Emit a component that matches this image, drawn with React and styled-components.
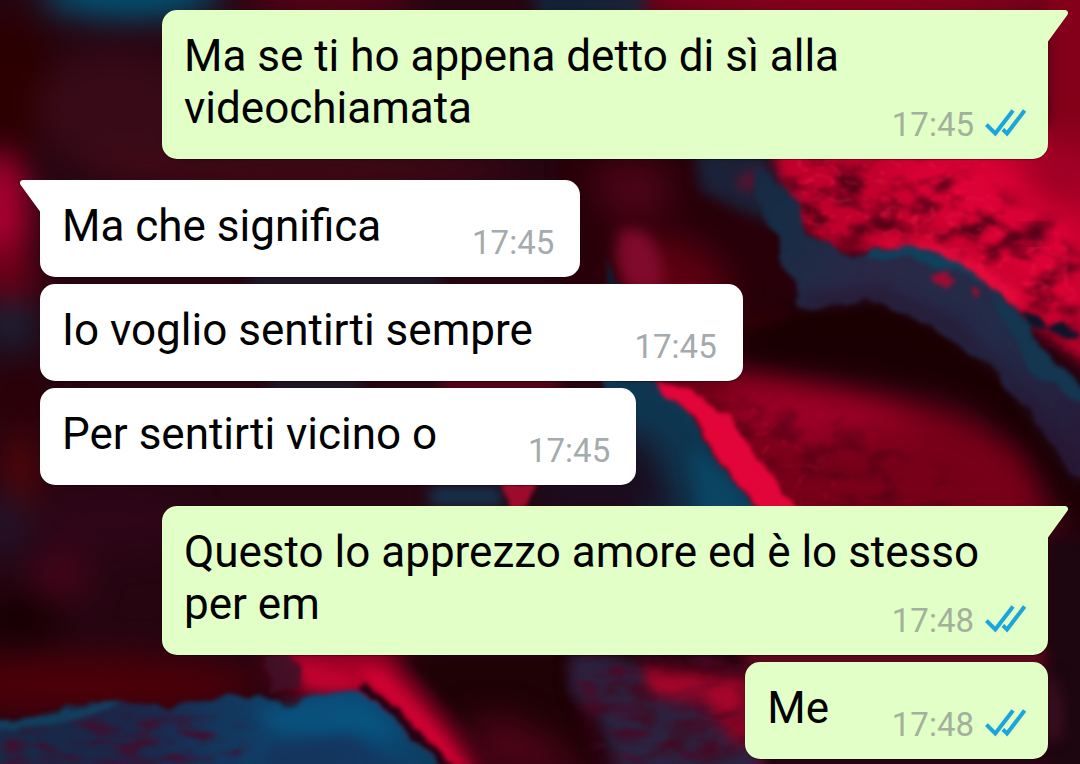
import styled, { createGlobalStyle } from "styled-components"

let GlobalStyle = createGlobalStyle`
  body {
    margin: 0;
    background: #24040c;
    font-family: Roboto, "Noto Sans", sans-serif;
  }
`
let Page = styled.main`
  position: relative;
  min-height: 100vh;
  box-sizing: border-box;
  overflow: hidden;
  padding: 10px 32px 5px 40px;
`
let WallpaperSvg = styled.svg`
  position: absolute;
  inset: 0;
  width: 100%;
  height: 100%;

  filter {
    color-interpolation-filters: sRGB;
  }
`
let Conversation = styled.div`
  position: relative;
  display: flex;
  flex-direction: column;
  gap: 21px;
`
let Group = styled.ul`
  display: flex;
  flex-direction: column;
  align-items: ${ props => props.$own ? 'flex-end' : 'flex-start' };
  gap: 7px;
  margin: 0;
  padding: ${ props => props.$own ? '0 0 0 122px' : '0 122px 0 0' };
  list-style: none;
`
let Bubble = styled.li`
  position: relative;
  padding: 20px 22px 25px 22px;
  border-radius: 15px;
  background: ${ props => props.$own ? '#e1ffc7' : '#ffffff' };
  box-shadow: 0 1px 1px rgba(0, 0, 0, 0.35);

  &:first-child {
    ${ props => props.$own ? 'border-top-right-radius' : 'border-top-left-radius' }: ${ props => props.$tail ? '0' : '15px' };
  }
`
let Text = styled.p`
  margin: 0;
  color: #000000;
  font-size: 44px;
  line-height: 52px;
  white-space: pre-wrap;
`
let MetaSpace = styled.span`
  display: inline-block;
  width: ${ props => props.$own ? '197px' : '177px' };
`
let Meta = styled.div`
  position: absolute;
  right: ${ props => props.$own ? '22px' : '26px' };
  bottom: 14px;
  display: flex;
  align-items: center;
  gap: 11px;
  font-size: 33px;
  line-height: 40px;
`
let Time = styled.time`
  color: ${ props => props.$own ? '#a3b09b' : '#a5aaac' };
`
let TailSvg = styled.svg`
  position: absolute;
  top: 0;
  ${ props => props.$own ? 'left: 100%' : 'right: 100%' };
  width: 20px;
  height: 32px;
  transform: ${ props => props.$own ? 'none' : 'scaleX(-1)' };
  fill: ${ props => props.$own ? '#e1ffc7' : '#ffffff' };
`
let TicksSvg = styled.svg`
  width: 41px;
  height: 33px;
  fill: none;
  stroke: #1aa6dd;
  stroke-width: 4;
`

let groups = [
  {
    id: 1,
    own: true,
    messages: [
      { id: 11, text: 'Ma se ti ho appena detto di sì alla videochiamata', time: '17:45' },
    ],
  },
  {
    id: 2,
    own: false,
    messages: [
      { id: 21, text: 'Ma che significa', time: '17:45' },
      { id: 22, text: 'Io voglio sentirti sempre ', time: '17:45' },
      { id: 23, text: 'Per sentirti vicino o', time: '17:45' },
    ],
  },
  {
    id: 3,
    own: true,
    messages: [
      { id: 31, text: 'Questo lo apprezzo amore ed è lo stesso per em', time: '17:48' },
      { id: 32, text: 'Me', time: '17:48' },
    ],
  },
]

function Tail ({ own }) {
  return (
    <TailSvg $own={own} viewBox="0 0 20 32" aria-hidden="true">
      <path d="M-1 0H17a3 3 0 0 1 2.3 5L0 31.5h-1z"/>
    </TailSvg>
  )
}

function Ticks () {
  return (
    <TicksSvg viewBox="0 0 41 33" role="img" aria-label="Letto">
      <path d="M1.4 15.6L10.3 24.5L28 1.5"/>
      <path d="M17.8 20.4L22 24.5L39.6 1.5"/>
    </TicksSvg>
  )
}

function Wallpaper () {
  return (
    <WallpaperSvg viewBox="0 0 1080 764" preserveAspectRatio="xMidYMid slice" aria-hidden="true">
      <defs>
        <filter id="haze" x="-60%" y="-60%" width="220%" height="220%">
          <feGaussianBlur stdDeviation="16"/>
        </filter>
        <filter id="soft" x="-30%" y="-30%" width="160%" height="160%">
          <feGaussianBlur stdDeviation="7"/>
        </filter>
        <filter id="rough" x="-20%" y="-20%" width="140%" height="140%">
          <feTurbulence type="fractalNoise" baseFrequency="0.04" numOctaves="3" seed="4" result="n"/>
          <feDisplacementMap in="SourceGraphic" in2="n" scale="14" xChannelSelector="R" yChannelSelector="G"/>
          <feGaussianBlur stdDeviation="2"/>
        </filter>
        <filter id="rock" x="-10%" y="-10%" width="120%" height="120%">
          <feGaussianBlur in="SourceGraphic" stdDeviation="12" result="shape"/>
          <feTurbulence type="fractalNoise" baseFrequency="0.03 0.05" numOctaves="5" seed="9"/>
          <feColorMatrix values="0 0 0 0 0.28  0 0 0 0 0  0 0 0 0 0.08  3.4 0 0 0 -1.5" result="spots"/>
          <feComposite in="spots" in2="shape" operator="in"/>
          <feGaussianBlur stdDeviation="1.4"/>
        </filter>
        <filter id="glints" x="-10%" y="-10%" width="120%" height="120%">
          <feGaussianBlur in="SourceGraphic" stdDeviation="12" result="shape"/>
          <feTurbulence type="turbulence" baseFrequency="0.03 0.06" numOctaves="3" seed="21"/>
          <feColorMatrix values="0 0 0 0 1  0 0 0 0 0.12  0 0 0 0 0.3  -6 0 0 0 0.85" result="spots"/>
          <feComposite in="spots" in2="shape" operator="in"/>
          <feGaussianBlur stdDeviation="1.4"/>
        </filter>
        <filter id="veins" x="-10%" y="-10%" width="120%" height="120%">
          <feGaussianBlur in="SourceGraphic" stdDeviation="8" result="shape"/>
          <feTurbulence type="fractalNoise" baseFrequency="0.025 0.07" numOctaves="4" seed="33"/>
          <feColorMatrix values="0 0 0 0 0.28  0 0 0 0 0.04  0 0 0 0 0.16  3.4 0 0 0 -1.5" result="spots"/>
          <feComposite in="spots" in2="shape" operator="in"/>
          <feGaussianBlur stdDeviation="1.4"/>
        </filter>
        <linearGradient id="ridge" gradientUnits="userSpaceOnUse" x1="700" y1="160" x2="1080" y2="460">
          <stop offset="0" stopColor="#1c2440"/>
          <stop offset="0.2" stopColor="#172c45"/>
          <stop offset="0.42" stopColor="#2a2846"/>
          <stop offset="0.7" stopColor="#222b48"/>
          <stop offset="1" stopColor="#271a38"/>
        </linearGradient>
        <linearGradient id="wave" gradientUnits="userSpaceOnUse" x1="0" y1="0" x2="440" y2="0">
          <stop offset="0" stopColor="#172a48"/>
          <stop offset="0.3" stopColor="#1d2548"/>
          <stop offset="0.62" stopColor="#0f4069"/>
          <stop offset="0.85" stopColor="#0a4a76"/>
          <stop offset="1" stopColor="#0f3a5c"/>
        </linearGradient>
      </defs>

      <rect width="1080" height="764" fill="#260511"/>

      {/* top strip and left side */}
      <g filter="url(#haze)">
        <ellipse cx="130" cy="-6" rx="90" ry="24" fill="#005578"/>
        <ellipse cx="15" cy="85" rx="36" ry="70" fill="#2c0000"/>
        <ellipse cx="115" cy="110" rx="80" ry="60" fill="#380a18"/>
        <ellipse cx="0" cy="212" rx="30" ry="62" fill="#a8002e"/>
        <ellipse cx="8" cy="275" rx="30" ry="26" fill="#6c0018"/>
        <ellipse cx="10" cy="325" rx="28" ry="24" fill="#1a2237"/>
        <ellipse cx="20" cy="400" rx="30" ry="30" fill="#2c0008"/>
        <ellipse cx="20" cy="475" rx="14" ry="46" fill="#5c0505"/>
        <ellipse cx="5" cy="525" rx="24" ry="36" fill="#231228"/>
        <ellipse cx="60" cy="575" rx="30" ry="26" fill="#43051a"/>
        <ellipse cx="110" cy="520" rx="80" ry="30" fill="#2f0618"/>
        <ellipse cx="20" cy="620" rx="40" ry="26" fill="#170003"/>
        <ellipse cx="80" cy="685" rx="180" ry="30" fill="#4c0008"/>
        <ellipse cx="300" cy="168" rx="220" ry="14" fill="#4a0a18"/>
        <ellipse cx="330" cy="-2" rx="90" ry="14" fill="#6a001a"/>
        <ellipse cx="860" cy="-2" rx="260" ry="22" fill="#98001f"/>
      </g>
      <path d="M530 -5H650L640 14H540z" fill="#10283d" filter="url(#soft)"/>

      {/* lit rock in the upper right */}
      <path d="M765 130H1120V390L1040 330L960 280L880 252L830 250L785 215z" fill="#c0002c" filter="url(#soft)"/>
      <path d="M1046 -20H1100V170H1046z" fill="#84001a" filter="url(#soft)"/>
      <path d="M880 158L1000 152L1080 185V330L1000 262L930 215z" fill="#dc0236" filter="url(#haze)"/>
      <path d="M1010 140H1100V215L1040 205z" fill="#a00026" filter="url(#haze)"/>
      <path d="M770 150L930 165L1080 240V370L1040 330L960 280L880 252L830 248L790 215z" fill="#fff" filter="url(#rock)" opacity="0.85"/>
      <path d="M765 150L960 150L1080 250V370L1040 330L960 280L880 252L830 248L785 215z" fill="#fff" filter="url(#glints)" opacity="0.8"/>
      <ellipse cx="1034" cy="234" rx="13" ry="8" fill="#2c0010" filter="url(#soft)"/>

      {/* dark hollow in the middle */}
      <path d="M560 150H760L790 260V340L700 350H560z" fill="#28000a" filter="url(#soft)"/>
      <path d="M590 165L660 160L675 215L610 225z" fill="#4b0418" filter="url(#haze)"/>
      <path d="M622 236L690 240L725 270L730 330H650L618 290z" fill="#5c0010" filter="url(#haze)"/>
      <path d="M744 320L790 312L800 330L750 335z" fill="#4a000c" filter="url(#soft)"/>
      <path d="M622 228Q610 262 630 290H662Q666 252 644 232z" fill="#800a2c" filter="url(#soft)"/>
      <path d="M604 250Q610 275 626 288H608z" fill="#121a30" filter="url(#rough)"/>

      {/* lower red slope, fading into the shadow of the ridge */}
      <path d="M640 375L744 365L860 390L960 410L1030 450L1060 530H640z" fill="#780019" filter="url(#haze)"/>
      <path d="M730 380Q800 385 880 405L930 430L800 440L730 420z" fill="#a00028" filter="url(#haze)"/>
      <path d="M690 400L760 400L880 440L980 500V520H720z" fill="#fff" filter="url(#rock)" opacity="0.6"/>
      <path d="M690 395L744 395L800 430L860 510H770z" fill="#fff" filter="url(#glints)" opacity="0.4"/>
      <path d="M735 330L800 310L870 298L940 310L1010 350L1070 410L1120 540L1070 520Q1030 430 950 390Q850 370 735 362z" fill="#1b0002" filter="url(#haze)"/>
      <path d="M750 335L800 312L870 300L940 318L1010 365L1060 430L1080 500Q1020 400 940 370Q850 350 750 352z" fill="#1b0002" filter="url(#soft)"/>

      {/* blue ridge running down to the right */}
      <path d="M695 150L765 150L778 185L800 205L780 225L740 210L700 190z" fill="#1b2138" filter="url(#soft)"/>
      <path d="M736 180L768 168L748 192z" fill="#7c0a2a" filter="url(#soft)"/>
      <path d="M862 242Q910 238 950 248L1008 284L1030 312L1000 304L930 258z" fill="#f20c40" filter="url(#soft)"/>
      <g filter="url(#rough)">
        <path d="M755 160L778 182L800 205L806 232L852 258L876 247L938 250L985 280L1018 308L1040 345L1090 395V500L1050 440L1000 375L940 330L880 301L800 308L790 270L775 235L760 215z" fill="url(#ridge)"/>
        <path d="M868 249Q910 245 946 254L985 284L940 266Q905 256 866 260z" fill="#10405c"/>
        <path d="M990 290L1018 308L1040 345L1090 395V410L1030 372z" fill="#143650"/>
        <path d="M932 272l14 -3l8 14l-9 8zM968 286l9 2l3 10l-7 -3z" fill="#9c0c34"/>
        <path d="M1022 312l16 2l12 16l-20 -2zM1045 328l18 -6l14 14l-18 2z" fill="#0c1429"/>
      </g>
      <path d="M800 295L880 285L960 320L1040 405L1080 460V490L1000 375L940 330L880 302L800 310z" fill="#281430" opacity="0.6" filter="url(#soft)"/>

      {/* lower blue patch with a bright edge */}
      <path d="M430 487H500L505 506H430z" fill="#143550" filter="url(#soft)"/>
      <path d="M600 380H655L690 410L715 455L765 520H640z" fill="#0f3650" filter="url(#rough)"/>
      <path d="M540 420L650 440L680 520H540z" fill="#1a0c1e" filter="url(#haze)"/>
      <path d="M690 445L730 480L760 515H700z" fill="#0b4464" filter="url(#soft)"/>
      <path d="M655 378L690 390L730 420L765 465L800 515H764L735 478L712 448L695 415L660 393z" fill="#e20539" filter="url(#rough)"/>
      <path d="M499 480H535L528 510H508z" fill="#9c0b2c" filter="url(#rough)"/>
      <path d="M250 277H440V286H250zM270 381H360V389H270z" fill="#152a42" filter="url(#soft)"/>
      <path d="M440 378H560V391H440z" fill="#680619" filter="url(#soft)"/>

      {/* bottom wave */}
      <path d="M270 640H385L430 700L490 775H400L345 690L290 690z" fill="#a80028" filter="url(#haze)"/>
      <path d="M290 658L350 672L375 680L340 695L305 690z" fill="#c00230" filter="url(#soft)"/>
      <path d="M362 665L385 672L430 720L478 775H450L400 712L368 685z" fill="#d20234" filter="url(#soft)"/>
      <path d="M366 680L376 690L460 768H440L362 690z" fill="#2a0012" filter="url(#rough)"/>
      <g filter="url(#rough)">
        <path d="M-20 722L40 716L75 704L110 700L165 706L215 700L230 690L245 700L262 694L285 706L330 692L360 690L385 710L460 780H-20z" fill="url(#wave)"/>
        <path d="M-20 722L40 717L110 700L122 706L60 724L-20 732z" fill="#12405f"/>
      </g>
      <path d="M255 712L330 697L360 700L400 735L280 735z" fill="#075a86" opacity="0.6" filter="url(#soft)"/>
      <path d="M270 745L350 735L420 775H260z" fill="#192c54" opacity="0.6" filter="url(#soft)"/>
      <path d="M0 736L110 718L240 722V764H0z" fill="#fff" filter="url(#veins)"/>
      <path d="M268 650Q300 655 304 685L270 694z" fill="#401127" filter="url(#rough)" opacity="0.9"/>

      {/* lower middle rubble */}
      <path d="M400 655H570V700L600 764H500z" fill="#1e0206" filter="url(#soft)"/>
      <path d="M640 665L760 675V775H640z" fill="#850625" filter="url(#soft)"/>
      <path d="M465 720Q520 700 590 775H490z" fill="#4c0418" filter="url(#haze)"/>
      <path d="M570 655H600L640 665L650 695L700 705L735 745H760V780H620L600 720L570 690z" fill="#2b2340" filter="url(#soft)"/>
      <path d="M570 655H740V764H600z" fill="#fff" filter="url(#veins)"/>
      <path d="M570 655H750V764H600z" fill="#fff" filter="url(#rock)" opacity="0.5"/>
      <path d="M640 672L655 690L700 698L740 715V690z" fill="#c00730" opacity="0.7" filter="url(#soft)"/>
      <path d="M745 650H1048V668H745z" fill="#68091f" filter="url(#soft)"/>
      <path d="M1050 540H1100V780H1050z" fill="#1d0610" filter="url(#soft)"/>
      <path d="M1045 670Q1070 695 1060 740H1045z" fill="#3c0e20" filter="url(#soft)"/>
    </WallpaperSvg>
  )
}

function Message ({ message, own, tail }) {
  return (
    <Bubble $own={own} $tail={tail}>
      { tail ? <Tail own={own}/> : null }
      <Text>{ message.text }<MetaSpace $own={own}/></Text>
      <Meta $own={own}>
        <Time $own={own}>{ message.time }</Time>
        { own ? <Ticks/> : null }
      </Meta>
    </Bubble>
  )
}

export default function App () {
  return (
    <Page>
      <GlobalStyle/>
      <Wallpaper/>
      <Conversation>
        { groups.map((g) => (
          <Group key={g.id} $own={g.own}>
            { g.messages.map((m, i) => (
              <Message key={m.id} message={m} own={g.own} tail={i === 0}/>
            )) }
          </Group>
        )) }
      </Conversation>
    </Page>
  )
}
